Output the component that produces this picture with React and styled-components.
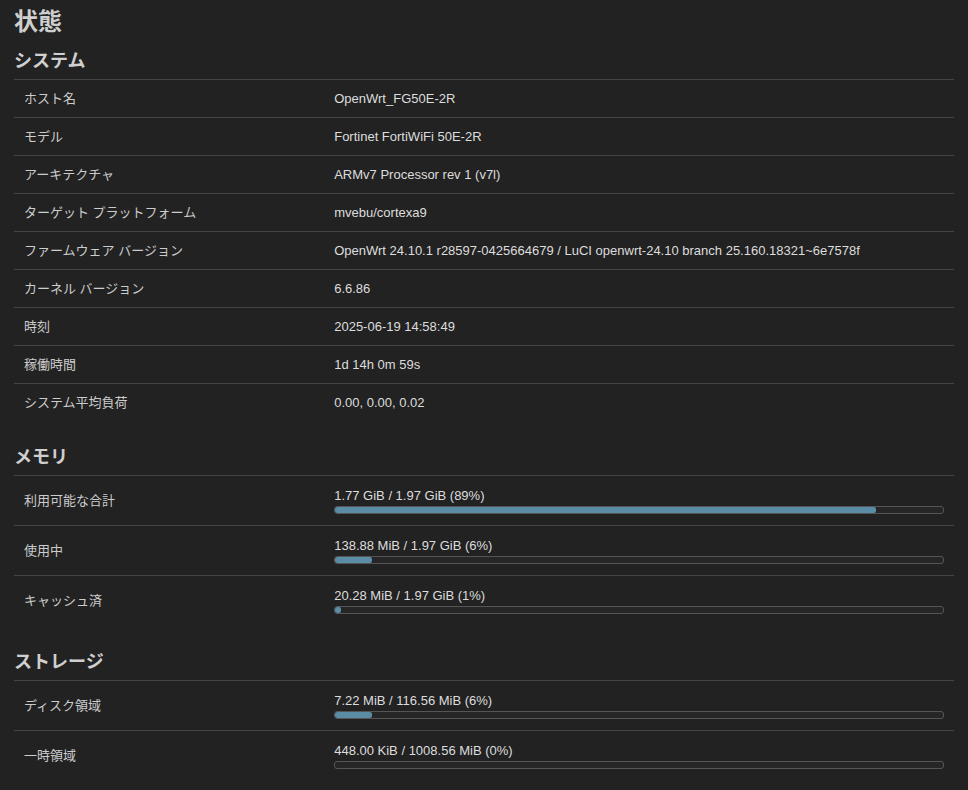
import React from "react";
import styled, { createGlobalStyle } from "styled-components";

const Global = createGlobalStyle`
  html, body { margin: 0; padding: 0; background: #222222; }
  body {
    font-family: "Liberation Sans", Arial, "Noto Sans CJK JP", sans-serif;
    color: #cccccc;
    font-size: 13px;
  }
`;

const Page = styled.div`
  padding: 7px 14px 10px 14px;
`;

const Title = styled.h2`
  margin: 0;
  font-size: 24px;
  line-height: 30px;
  font-weight: bold;
  color: #cfcfcf;
`;

const Section = styled.section`
  margin-top: ${(p) => p.$gap}px;
`;

const SectionTitle = styled.h3`
  margin: 0 0 6px 0;
  font-size: 18px;
  line-height: 24px;
  font-weight: bold;
  color: #cfcfcf;
`;

const Table = styled.div`
  width: 100%;
`;

const Row = styled.div`
  display: grid;
  grid-template-columns: 33% 1fr;
  border-top: 1px solid #444444;
  min-height: ${(p) => (p.$tall ? "49px" : "37px")};
`;

const Cell = styled.div`
  padding: 0 10px;
  display: flex;
  flex-direction: column;
  justify-content: center;
  line-height: 17px;
`;

const Label = styled(Cell)`
  color: #cccccc;
`;

const Value = styled(Cell)`
  color: #dddddd;
`;

const BarText = styled.div`
  line-height: 16px;
  color: #dddddd;
`;

const Bar = styled.div`
  margin-top: 2px;
  height: 6px;
  border: 1px solid #555555;
  border-radius: 3px;
  background: #262626;
  overflow: hidden;
`;

const Fill = styled.div`
  height: 100%;
  background: #5a8ca6;
  border-radius: 2px;
`;

const system = [
  ["ホスト名", "OpenWrt_FG50E-2R"],
  ["モデル", "Fortinet FortiWiFi 50E-2R"],
  ["アーキテクチャ", "ARMv7 Processor rev 1 (v7l)"],
  ["ターゲット プラットフォーム", "mvebu/cortexa9"],
  ["ファームウェア バージョン", "OpenWrt 24.10.1 r28597-0425664679 / LuCI openwrt-24.10 branch 25.160.18321~6e7578f"],
  ["カーネル バージョン", "6.6.86"],
  ["時刻", "2025-06-19 14:58:49"],
  ["稼働時間", "1d 14h 0m 59s"],
  ["システム平均負荷", "0.00, 0.00, 0.02"],
];

const memory = [
  ["利用可能な合計", "1.77 GiB / 1.97 GiB (89%)", 89],
  ["使用中", "138.88 MiB / 1.97 GiB (6%)", 6],
  ["キャッシュ済", "20.28 MiB / 1.97 GiB (1%)", 1],
];

const storage = [
  ["ディスク領域", "7.22 MiB / 116.56 MiB (6%)", 6],
  ["一時領域", "448.00 KiB / 1008.56 MiB (0%)", 0],
];

function BarRow({ label, text, pct }) {
  return (
    <Row $tall>
      <Label>{label}</Label>
      <Value>
        <BarText>{text}</BarText>
        <Bar>
          <Fill style={{ width: `${pct}%` }} />
        </Bar>
      </Value>
    </Row>
  );
}

export default function App() {
  return (
    <>
      <Global />
      <Page>
        <Title>状態</Title>
        <Section $gap={12}>
          <SectionTitle>システム</SectionTitle>
          <Table>
            {system.map(([k, v]) => (
              <Row key={k}>
                <Label>{k}</Label>
                <Value>{v}</Value>
              </Row>
            ))}
          </Table>
        </Section>
        <Section $gap={24}>
          <SectionTitle>メモリ</SectionTitle>
          <Table>
            {memory.map(([k, t, p]) => (
              <BarRow key={k} label={k} text={t} pct={p} />
            ))}
          </Table>
        </Section>
        <Section $gap={25}>
          <SectionTitle>ストレージ</SectionTitle>
          <Table>
            {storage.map(([k, t, p]) => (
              <BarRow key={k} label={k} text={t} pct={p} />
            ))}
          </Table>
        </Section>
      </Page>
    </>
  );
}
